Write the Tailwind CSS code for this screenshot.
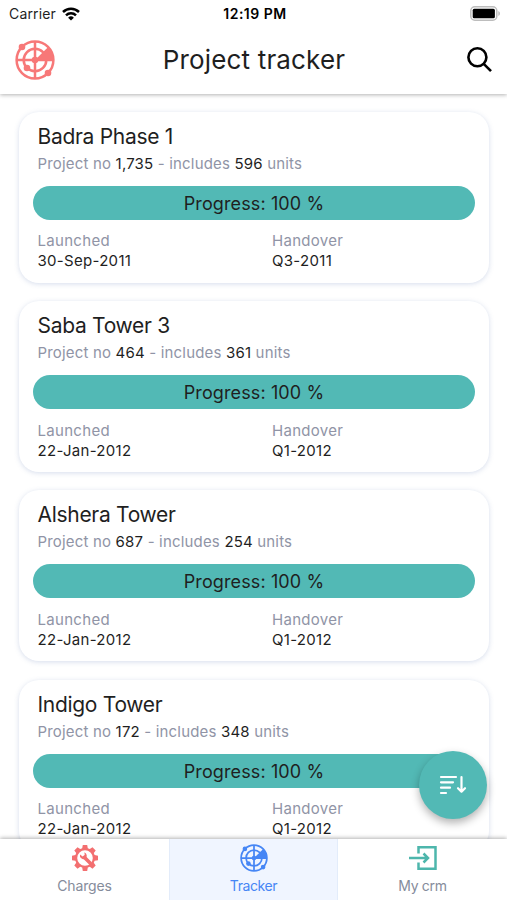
<!DOCTYPE html>
<html lang="en">
<head>
    <meta charset="UTF-8">
    <meta name="viewport" content="width=device-width, initial-scale=1.0">
    <title>Project tracker</title>
    <script src="https://cdn.jsdelivr.net/npm/@tailwindcss/browser@4"></script>
</head>
<body class="bg-white">

    <!-- Shared radar icon -->
    <svg class="hidden">
        <symbol id="radar" viewBox="0 0 40 40">
            <g fill="none" stroke="currentColor" stroke-width="2.5">
                <circle cx="20" cy="20" r="18.4"/>
                <circle cx="20" cy="20" r="11.3"/>
                <path d="M20 2v36M2 20h36"/>
            </g>
            <path d="M20 20 33.2 7a18.5 18.5 0 0 1 5.3 14z" fill="currentColor"/>
            <g fill="currentColor">
                <circle cx="7" cy="7" r="3.3"/>
                <circle cx="20" cy="20" r="3.3"/>
                <circle cx="12" cy="28" r="3.3"/>
                <circle cx="33" cy="33" r="3.3"/>
            </g>
        </symbol>
    </svg>

    <div class="relative w-[507px] h-[900px] overflow-hidden flex flex-col bg-white text-[#1f1f1f] font-[Inter,sans-serif]">

        <!-- Header -->
        <header class="relative z-10 h-[94px] shrink-0 bg-white shadow-[0_1px_4px_rgba(0,0,0,0.3)]">
            <div class="h-[27px] grid grid-cols-3 items-center pl-[9px] pr-[6px]">
                <div class="flex items-center gap-[6px] text-[14px]">
                    <span class="tracking-[0.15px]">Carrier</span>
                    <svg class="w-[18px] h-[14px]" viewBox="0 0 18 14" fill="none" stroke="#000" stroke-width="2.5">
                        <path d="M1 5a11.5 11.5 0 0 1 16 0"/>
                        <path d="M4 8.3a7.2 7.2 0 0 1 10 0"/>
                        <path d="M9 13.6 6.1 10.7a4.1 4.1 0 0 1 5.8 0z" fill="#000" stroke="none"/>
                    </svg>
                </div>
                <div class="text-center text-[14px] font-semibold tracking-[0.5px] text-black">12:19 PM</div>
                <svg class="justify-self-end w-[31px] h-[15px]" viewBox="0 0 31 15">
                    <rect x=".8" y=".8" width="26" height="13.4" rx="4" fill="#fff" stroke="#bdbdbd" stroke-width="1.5"/>
                    <rect x="2.7" y="2.7" width="22.2" height="9.6" rx="1.5"/>
                    <path d="M28.3 5v5c2.200-.8 2.200-4.200 0-5z" fill="#bdbdbd"/>
                </svg>
            </div>
            <div class="h-[65px] grid grid-cols-[1fr_auto_1fr] items-center pl-[15px] pr-[14px]">
                <svg class="w-10 h-10 text-[#f77878]"><use href="#radar"/></svg>
                <h1 class="text-[26px] leading-8 tracking-[0.15px]">Project tracker</h1>
                <svg class="justify-self-end w-[27px] h-[27px]" viewBox="0 0 27 27" fill="none" stroke="#000" stroke-width="2.6">
                    <circle cx="11.4" cy="11.2" r="9"/>
                    <path d="m17.7 17.8 7.3 7.4"/>
                </svg>
            </div>
        </header>

        <!-- Project list -->
        <main id="projects" class="flex-1 flex flex-col gap-[18.4px] pt-[17.7px] pl-[19px] pr-[18px] overflow-hidden"></main>

        <!-- Sort button -->
        <button class="absolute z-10 left-[419px] top-[751px] w-[68px] h-[68px] rounded-full bg-[#52b9b5] shadow-[0_4px_8px_rgba(0,0,0,0.3)] flex items-center justify-center">
            <svg class="w-7 h-5" viewBox="0 0 28 20" fill="none" stroke="#fff" stroke-width="2.2" stroke-linecap="round" stroke-linejoin="round">
                <path d="M2 2h15M2 7.3h12M2 12.7h9M2 18h5M22.5 2v14M19 13.2l3.5 3.5 3.5-3.5"/>
            </svg>
        </button>

        <!-- Tab bar -->
        <nav class="relative z-10 h-[61px] shrink-0 grid grid-cols-3 bg-white shadow-[0_-1px_4px_rgba(0,0,0,0.3)] text-[14px] text-[#858c9b]">
            <a class="flex flex-col items-center pt-[5px]">
                <svg class="w-[28px] h-[28px]" viewBox="0 0 28 28">
                    <path fill="#f36f70" fill-rule="evenodd" d="M11.8 1h4.4l.6 3.3 2 .8 2.7-1.9 3.2 3.2-1.9 2.7.8 2 3.4.7v4.4l-3.4.6-.8 2 1.9 2.7-3.2 3.2-2.7-1.9-2 .8-.6 3.4h-4.4l-.6-3.4-2-.8-2.7 1.9-3.2-3.2 1.9-2.7-.8-2-3.4-.6v-4.4l3.4-.7.8-2-1.9-2.7 3.2-3.2 2.7 1.9 2-.8zM14 6.2a7.8 7.8 0 1 0 0 15.6 7.8 7.8 0 0 0 0-15.6z"/>
                    <path d="m13.5 13.5 5.6 5.6" stroke="#f36f70" stroke-width="3.6" stroke-linecap="round"/>
                    <path d="M9 10.5a3.7 3.7 0 0 0 5.3 4.2 3.7 3.7 0 0 0-.9-6.4l.3 2.7-2 1.6z" fill="#f36f70"/>
                </svg>
                <span class="leading-5 mt-[4px] tracking-[-0.15px]">Charges</span>
            </a>
            <a class="flex flex-col items-center pt-[5px] bg-[#f0f5ff] border-x border-[#e3ecfa] text-[#4686f5]">
                <svg class="w-[28px] h-[28px]"><use href="#radar"/></svg>
                <span class="leading-5 mt-[4px] tracking-[-0.4px]">Tracker</span>
            </a>
            <a class="flex flex-col items-center pt-[5px]">
                <svg class="w-[28px] h-[28px]" viewBox="0 0 28 28" fill="none" stroke="#4db6ac" stroke-width="2.5">
                    <path d="M9.5 9.5V3.2h17v21.6h-17v-6.3"/>
                    <path d="M0 14h19M14.5 9.5 19 14l-4.5 4.5"/>
                </svg>
                <span class="leading-5 mt-[4px] tracking-[-0.3px]">My crm</span>
            </a>
        </nav>
    </div>

    <script>
        const projects = [
            { name: 'Badra Phase 1', no: '1,735', units: 596, launched: '30-Sep-2011', handover: 'Q3-2011' },
            { name: 'Saba Tower 3', no: '464', units: 361, launched: '22-Jan-2012', handover: 'Q1-2012' },
            { name: 'Alshera Tower', no: '687', units: 254, launched: '22-Jan-2012', handover: 'Q1-2012' },
            { name: 'Indigo Tower', no: '172', units: 348, launched: '22-Jan-2012', handover: 'Q1-2012' },
        ];

        document.getElementById('projects').innerHTML = projects.map(p => `
            <section class="h-[171px] shrink-0 rounded-[20px] bg-white pt-[10px] px-[14px] shadow-[0_1px_5px_rgba(90,120,180,0.25)]">
                <h2 class="pl-[4.5px] text-[21px] leading-[30px] tracking-[-0.3px]">${p.name}</h2>
                <p class="pl-[4.5px] text-[15px] leading-[23px] tracking-[0.18px] text-[#9094a6]">Project no <span class="text-[#1f1f1f]">${p.no}</span> - includes <span class="text-[#1f1f1f]">${p.units}</span> units</p>
                <div class="mt-[11px] h-[34px] rounded-full bg-[#52b9b5] text-center text-[18px] leading-[35px] tracking-[0.12px]">Progress: 100 %</div>
                <div class="mt-[11.5px] pl-[4.5px] grid grid-cols-[234.5px_1fr] text-[15px] tracking-[0.3px]">
                    <div>
                        <div class="leading-5 text-[#9094a6]">Launched</div>
                        <div class="leading-[19px]">${p.launched}</div>
                    </div>
                    <div>
                        <div class="leading-5 text-[#9094a6]">Handover</div>
                        <div class="leading-[19px]">${p.handover}</div>
                    </div>
                </div>
            </section>`).join('');
    </script>
</body>
</html>
